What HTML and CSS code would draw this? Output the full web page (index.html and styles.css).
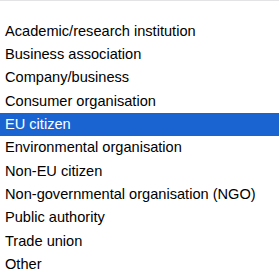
FILE: index.html
```html
<!DOCTYPE html>
<html lang="en">
<head>
    <meta charset="UTF-8">
    <meta name="viewport" content="width=device-width, initial-scale=1.0">
    <title>Organisation type</title>
    <link rel="stylesheet" href="styles.css">
</head>
<body>

<!-- Lista desplegable de tipos de organización -->
<ul class="lista">
    <li class="opcion">Academic/research institution</li>
    <li class="opcion">Business association</li>
    <li class="opcion">Company/business</li>
    <li class="opcion">Consumer organisation</li>
    <li class="opcion seleccionada">EU citizen</li>
    <li class="opcion">Environmental organisation</li>
    <li class="opcion">Non-EU citizen</li>
    <li class="opcion">Non-governmental organisation (NGO)</li>
    <li class="opcion">Public authority</li>
    <li class="opcion">Trade union</li>
    <li class="opcion">Other</li>
</ul>

</body>
</html>
```

FILE: styles.css
```css
body {
    margin: 0;
    padding: 0;
    background-color: #ffffff;
    font-family: "Liberation Sans", Arial, sans-serif;
    overflow: hidden;
}

/* Lista de opciones */
.lista {
    list-style: none;
    margin: 0;
    padding: 18.7px 0 0 0;
    border-top: 1px solid #e3e3e6;
}

/* Cada opción */
.opcion {
    height: 23.33px;
    line-height: 23.33px;
    padding-left: 5px;
    font-size: 14.6px;
    color: #000000;
    white-space: nowrap;
}

.seleccionada {
    background-color: #1a64d2;
    color: #ffffff;
}
```
